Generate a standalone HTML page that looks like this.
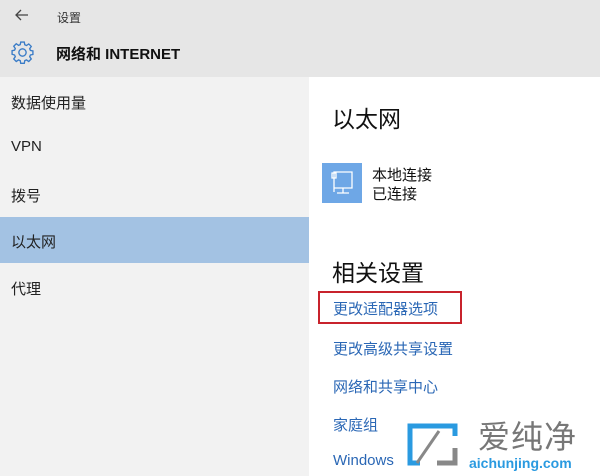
<!DOCTYPE html>
<html><head><meta charset="utf-8"><style>
*{margin:0;padding:0;box-sizing:border-box}
body{width:600px;height:476px;overflow:hidden;font-family:"Liberation Sans","Noto Sans CJK SC",sans-serif;background:#fff;position:relative}
.hdr{position:absolute;left:0;top:0;width:600px;height:77px;background:#e6e6e6}
.left{position:absolute;left:0;top:77px;width:309px;height:399px;background:#f2f2f2}
.t{position:absolute;white-space:nowrap}
.nav{left:11px;font-size:15px;color:#222}
.sel{position:absolute;left:0;top:217px;width:309px;height:46px;background:#a3c2e3}
.lk{left:333px;font-size:15px;color:#2a67b5}
</style></head><body>
<div class="hdr"></div>
<div class="left"></div>
<div class="sel"></div>
<svg class="t" style="left:14px;top:8px" width="16" height="14" viewBox="0 0 16 14"><path d="M14 7H2M7 2L2 7l5 5" fill="none" stroke="#444" stroke-width="1.3"/></svg>
<div class="t" style="left:57px;top:9px;font-size:12px;color:#333">设置</div>
<svg class="t" style="left:10px;top:40px" width="25" height="25" viewBox="0 0 24 24"><path d="M10.3 2h3.4l.5 2.6 1.6.7 2.2-1.5 2.4 2.4-1.5 2.2.7 1.6 2.4.5v3.4l-2.4.5-.7 1.6 1.5 2.2-2.4 2.4-2.2-1.5-1.6.7-.5 2.6h-3.4l-.5-2.6-1.6-.7-2.2 1.5-2.4-2.4 1.5-2.2-.7-1.6L2 13.7v-3.4l2.4-.5.7-1.6-1.5-2.2 2.4-2.4 2.2 1.5 1.6-.7z" fill="none" stroke="#3a7cc7" stroke-width="1.3"/><circle cx="12" cy="12" r="3.5" fill="none" stroke="#3a7cc7" stroke-width="1.3"/></svg>
<div class="t" style="left:56px;top:43px;font-size:15px;font-weight:bold;color:#111">网络和 INTERNET</div>
<div class="t nav" style="top:92px">数据使用量</div>
<div class="t nav" style="top:138px">VPN</div>
<div class="t nav" style="top:185px">拨号</div>
<div class="t nav" style="top:231px">以太网</div>
<div class="t nav" style="top:278px">代理</div>
<div class="t" style="left:332px;top:100px;font-size:23px;color:#111">以太网</div>
<svg class="t" style="left:322px;top:163px" width="40" height="40" viewBox="0 0 40 40"><rect width="40" height="40" fill="#6ea7e6"/><path d="M12 9h18v16H12zM21 25v5M15 30h12M10 10h4v5h-4zM12 15v14" fill="none" stroke="#fff" stroke-width="1.3"/></svg>
<div class="t" style="left:372px;top:164px;font-size:15px;color:#111">本地连接</div>
<div class="t" style="left:372px;top:183px;font-size:15px;color:#111">已连接</div>
<div class="t" style="left:332px;top:254px;font-size:23px;color:#111">相关设置</div>
<div class="t" style="left:318px;top:291px;width:144px;height:33px;border:2px solid #c8232c"></div>
<div class="t lk" style="top:298px">更改适配器选项</div>
<div class="t lk" style="top:338px">更改高级共享设置</div>
<div class="t lk" style="top:376px">网络和共享中心</div>
<div class="t lk" style="top:414px">家庭组</div>
<div class="t lk" style="top:452px">Windows</div>
<svg class="t" style="left:405px;top:423px" width="56" height="44" viewBox="0 0 56 44"><path d="M30 3H5v37h10" fill="none" stroke="#2a9ae0" stroke-width="5"/><path d="M30 3h20v10" fill="none" stroke="#2a9ae0" stroke-width="5"/><path d="M50 25v15H32" fill="none" stroke="#888" stroke-width="5"/><path d="M12 40L34 8" stroke="#888" stroke-width="3"/></svg>
<div class="t" style="left:478px;top:420px;font-size:32px;color:#777;letter-spacing:1px;line-height:34px">爱纯净</div>
<div class="t" style="left:469px;top:455px;font-size:14px;font-weight:bold;color:#2a9ae0">aichunjing.com</div>
</body></html>
